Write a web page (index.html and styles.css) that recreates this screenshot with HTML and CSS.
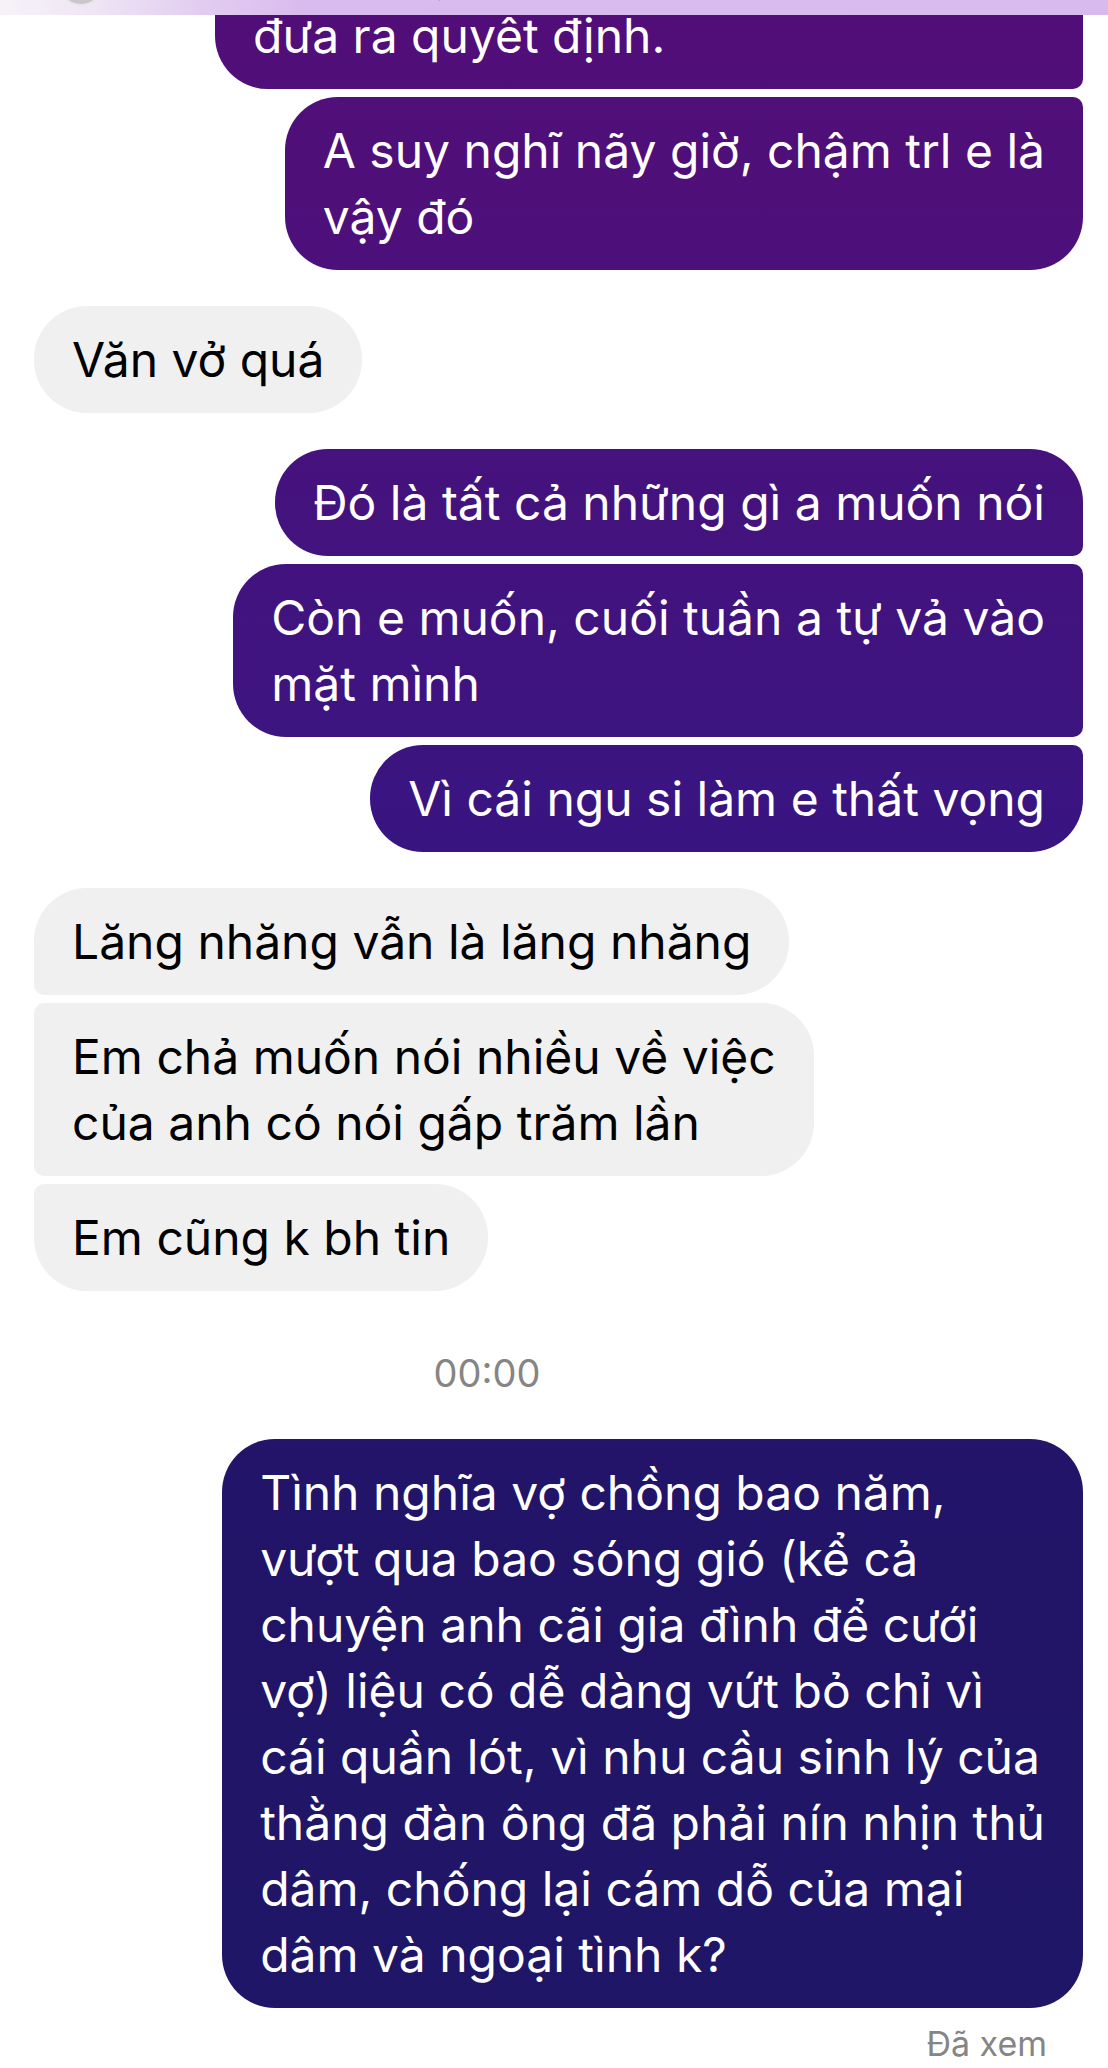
FILE: index.html
```html
<!DOCTYPE html>
<html lang="vi">
<head>
<meta charset="utf-8">
<title>Tin nhắn</title>
<link rel="stylesheet" href="styles.css">
</head>
<body>
<div class="screen">
  <header class="topbar">
    <span class="avatar"></span>
    <span class="title">Nguyễn Phạm Quỳnh Ngọc</span>
  </header>

  <main class="thread">
    <div class="group out cut">
      <div class="bubble out mid wide">Anh đã nghĩ kỹ rồi mới<br>đưa ra quyêt định.</div>
      <div class="bubble out last">A suy nghĩ nãy giờ, chậm trl e là<br>vậy đó</div>
    </div>

    <div class="group in">
      <div class="bubble in single">Văn vở quá</div>
    </div>

    <div class="group out">
      <div class="bubble out first">Đó là tất cả những gì a muốn nói</div>
      <div class="bubble out mid">Còn e muốn, cuối tuần a tự vả vào<br>mặt mình</div>
      <div class="bubble out last">Vì cái ngu si làm e thất vọng</div>
    </div>

    <div class="group in">
      <div class="bubble in first">Lăng nhăng vẫn là lăng nhăng</div>
      <div class="bubble in mid">Em chả muốn nói nhiều về việc<br>của anh có nói gấp trăm lần</div>
      <div class="bubble in last">Em cũng k bh tin</div>
    </div>

    <div class="stamp">00:00</div>

    <div class="group out">
      <div class="bubble out single">Tình nghĩa vợ chồng bao năm,<br>vượt qua bao sóng gió (kể cả<br>chuyện anh cãi gia đình để cưới<br>vợ) liệu có dễ dàng vứt bỏ chỉ vì<br>cái quần lót, vì nhu cầu sinh lý của<br>thằng đàn ông đã phải nín nhịn thủ<br>dâm, chống lại cám dỗ của mại<br>dâm và ngoại tình k?</div>
    </div>

    <div class="seen">Đã xem</div>
  </main>
</div>
</body>
</html>
```

FILE: styles.css
```css
* {
  box-sizing: border-box;
}

html,
body {
  margin: 0;
  padding: 0;
  background: #ffffff;
}

body {
  width: 1108px;
  height: 2068px;
  overflow: hidden;
  font-family: "Inter", "Noto Sans", "Liberation Sans", sans-serif;
}

.screen {
  position: relative;
  width: 1108px;
  height: 2068px;
  overflow: hidden;
}

/* frosted header, only its lower edge is visible */
.topbar {
  position: absolute;
  top: 0;
  left: 0;
  right: 0;
  height: 15px;
  overflow: hidden;
  z-index: 5;
  background: linear-gradient(90deg, #f6f3f8 0px, #efe6f5 90px, #e2cdf0 200px, #dabbef 300px, #d9baee 100%);
}

.topbar .avatar {
  position: absolute;
  left: 58px;
  top: -40px;
  width: 46px;
  height: 46px;
  border-radius: 50%;
  background: #c9c6cc;
  border: 2px solid #e9e6ec;
}

.topbar .title {
  position: absolute;
  left: 232px;
  top: -42px;
  font-size: 38px;
  line-height: 40px;
  color: #3a2f44;
  white-space: nowrap;
}

.thread {
  display: flex;
  flex-direction: column;
  gap: 36px;
  padding: 0 25px 0 34px;
}

.group {
  display: flex;
  flex-direction: column;
  gap: 8px;
}

.group.out {
  align-items: flex-end;
}

.group.in {
  align-items: flex-start;
}

.group.cut {
  margin-top: -84px;
}

.bubble {
  max-width: 868px;
  padding: 21px 38px 20px 38px;
  font-size: 48px;
  line-height: 66px;
  white-space: nowrap;
}

.bubble.wide {
  width: 868px;
}

.bubble.out {
  color: #ffffff;
  background: linear-gradient(180deg,
      #520e78 0px,
      #4d107a 250px,
      #45127d 480px,
      #3d1480 720px,
      #341580 950px,
      #2a1575 1250px,
      #221468 1500px,
      #1f1667 2068px) fixed;
  border-radius: 53px;
}

.bubble.in {
  color: #000000;
  background: #f0f0f0;
  border-radius: 53px;
}

.bubble.out.first {
  border-bottom-right-radius: 10px;
}

.bubble.out.mid {
  border-top-right-radius: 10px;
  border-bottom-right-radius: 10px;
}

.bubble.out.last {
  border-top-right-radius: 10px;
}

.bubble.in.first {
  border-bottom-left-radius: 10px;
}

.bubble.in.mid {
  border-top-left-radius: 10px;
  border-bottom-left-radius: 10px;
}

.bubble.in.last {
  border-top-left-radius: 10px;
}

.stamp {
  align-self: center;
  margin: 22px 143px 6px 0;
  font-size: 38px;
  line-height: 48px;
  color: #858585;
}

.seen {
  align-self: flex-end;
  margin-top: -21px;
  padding-right: 36px;
  font-size: 34px;
  line-height: 42px;
  color: #858585;
}
```
